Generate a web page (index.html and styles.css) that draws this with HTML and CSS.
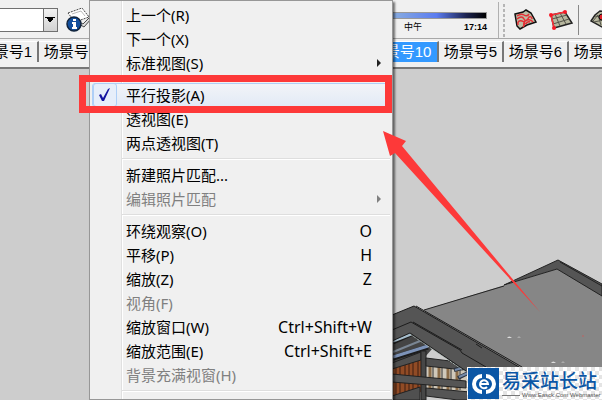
FILE: index.html
```html
<!DOCTYPE html>
<html lang="zh-CN">
<head>
<meta charset="utf-8">
<meta name="viewport" content="width=device-width, initial-scale=1">
<title>平行投影</title>
<link rel="stylesheet" href="styles.css">
</head>
<body>
<header class="toolbar">
  <select class="combo" aria-label="图层"><option></option></select>
  <button class="tool tool-info" aria-label="图层信息">
    <svg width="24" height="26" viewBox="0 0 24 26">
      <g stroke="#4a4a4a" stroke-width="1">
        <path d="M8 14 18 20 25 12 16 8Z" fill="#ddd"/>
        <path d="M6 11 17 17 24 10 14 5Z" fill="#eee"/>
        <path d="M2 6 16 1 23 10 9 15Z" fill="#fff" stroke-dasharray="2 1"/>
        <path d="M6 7 15 4 19 9" fill="none" stroke="#bbb"/>
      </g>
      <circle cx="8" cy="17" r="7" fill="#124f9e" stroke="#10233c" stroke-width="1.5"/>
      <path d="M7 12h3v2H7zM6 15h4v5h1v2H6v-2h1v-3H6z" fill="#fff"/>
    </svg>
  </button>
  <div class="time">
    <div class="time-bar"></div>
    <div class="time-labels"><span>中午</span><b>17:14</b></div>
  </div>
  <div class="divider divider-full"></div>
  <div class="grip"></div>
  <button class="tool" aria-label="根据等高线创建">
    <svg width="24" height="22" viewBox="0 0 24 22">
      <path d="M1 5 9 3 12 1 17 4 22 13 13 16 6 20 3 17Z" fill="#bcbba4" stroke="#111" stroke-width="1.5"/>
      <path d="M3 7q4-3 7-1t5-1M3 10q5-4 7 0t5-2q3-1 3 2M4 16q-1-5 4-4t1 6M10 17q-1-5 3-6t6 2M12 15q1-3 4-2" fill="none" stroke="#e52e35" stroke-width="1.5"/>
    </svg>
  </button>
  <button class="tool tool-grid" aria-label="根据网格创建">
    <svg width="26" height="22" viewBox="0 0 26 22">
      <path d="M3 6 17 3 24 14 6 19Z" fill="#b7b79f" stroke="#222" stroke-width="1.5"/>
      <path d="M4 10 19 6M5 15 21 10M7 5 12 17M12 4 18 15" stroke="#54544a" fill="none"/>
      <path d="M6 19 3 6 17 3" fill="none" stroke="#ff3038" stroke-width="1.5"/>
      <g fill="#f51926"><circle cx="3" cy="6" r="2"/><circle cx="17" cy="3" r="2"/><circle cx="6" cy="19" r="2"/></g>
    </svg>
  </button>
  <div class="divider"></div>
  <button class="tool tool-smoove" aria-label="曲面起伏">
    <svg width="24" height="22" viewBox="0 0 24 22">
      <path d="M1 12 5 6 10 2 17 3 23 14 12 18Z" fill="#b7b79f" stroke="#222" stroke-width="1.5"/>
      <path d="M3 12 8 6 11 16M5 7l12 2M4 13l14-3" fill="none" stroke="#54544a"/>
      <circle cx="12" cy="8" r="3" fill="#df2028" stroke="#111"/>
    </svg>
  </button>
</header>

<nav class="tabs">
  <button class="tab">场景号1</button>
  <button class="tab">场景号2</button>
  <button class="tab tab-active">场景号10</button>
  <button class="tab">场景号5</button>
  <button class="tab">场景号6</button>
  <button class="tab">场景号7</button>
</nav>

<main class="viewport">
  <svg class="scene" viewBox="0 69 602 331" preserveAspectRatio="xMinYMin slice" aria-hidden="true">
    <path d="M424 310 557 269 602 294V400H480Z" fill="#868686"/>
    <path d="M424 310 504 286" stroke="#222"/>
    <path d="M504 285 558 260 602 284V296L557 269Z" fill="#555" stroke="#222"/>
    <path d="M560 262 602 286" stroke="#222"/>
    <path d="M392 366 421 356V392L392 400Z" fill="#914b25"/>
    <path d="M396 364V400M400 362V400M405 360V400M409 358V400M413 356V400M418 354V400" stroke="#3d1f12"/>
    <path d="M427 364H468V392H427Z" fill="#cfc8ba"/>
    <path d="M430 366V390M439 366V390M448 366V390M457 366V390" stroke="#8b6c48" stroke-width="3"/>
    <path d="M433 366V390M442 366V390M451 366V390M460 366V390" stroke="#333"/>
    <path d="M392 334 411 330 432 349 425 357 392 368Z" fill="#444"/>
    <path d="M392 363 421 352V360L392 369Z" fill="#505050" stroke="#222"/>
    <path d="M393 352 420 341" stroke="#7a8694" stroke-width="2"/>
    <path d="M393 342 411 334M393 358 428 347" stroke="#1c1c1c" stroke-width="5"/>
    <path d="M393 341 411 334" stroke="#a5bccb" stroke-width="3"/>
    <path d="M393 357 428 346" stroke="#7d93b8" stroke-width="3"/>
    <path d="M421 351H426V400H421Z" fill="#474747" stroke="#222"/>
    <path d="M426 358 458 362 464 370 426 366Z" fill="#505050" stroke="#222"/>
    <path d="M392 374 466 381V388L392 382Z" fill="#555" stroke="#222"/>
    <path d="M426 388 470 392V400H458L426 396Z" fill="#555" stroke="#222"/>
    <path d="M392 396 420 387V400H392Z" fill="#505050" stroke="#222"/>
    <path d="M454 370 466 367M458 378 468 373" stroke="#2c3440" stroke-width="4"/>
    <path d="M455 370 466 367M459 377 468 373" stroke="#7489a7" stroke-width="2"/>
    <path d="M392 315 414 306 519 367V372H467L410 333 392 341Z" fill="#555"/>
    <path d="M410 334 466 372" stroke="#a8b4b0" stroke-dasharray="3 1"/>
    <path d="M392 315 414 306 519 367M416 306 522 367M392 330 411 322 460 350 462 353 486 367M413 322 462 350M392 341 410 333 466 371M476 344 482 348" fill="none" stroke="#1c1c1c"/>
    <path d="M507 338q2-3 5 0M551 363q2-3 5 0" fill="#ddd"/>
    <path d="M517 338l2-2 2 2M561 363l2-2 2 2" fill="#aaa"/>
    <path d="M582 336h2" stroke="#bd6260"/>
  </svg>
</main>

<div class="menu" role="menu">
  <button class="item">上一个(R)</button>
  <button class="item">下一个(X)</button>
  <button class="item">标准视图(S)<i class="more"></i></button>
  <hr>
  <button class="item item-checked">
    <span class="check"><svg width="14" height="16" viewBox="0 0 14 16"><path d="M1 8 3 7 5 11 10 2 12 1 6 14H4Z" fill="#1414a0"/></svg></span>平行投影(A)
  </button>
  <button class="item">透视图(E)</button>
  <button class="item">两点透视图(T)</button>
  <hr>
  <button class="item">新建照片匹配...</button>
  <button class="item" disabled>编辑照片匹配<i class="more"></i></button>
  <hr>
  <button class="item">环绕观察(O)<kbd>O</kbd></button>
  <button class="item">平移(P)<kbd>H</kbd></button>
  <button class="item">缩放(Z)<kbd>Z</kbd></button>
  <button class="item" disabled>视角(F)</button>
  <button class="item">缩放窗口(W)<kbd>Ctrl+Shift+W</kbd></button>
  <button class="item">缩放范围(E)<kbd>Ctrl+Shift+E</kbd></button>
  <button class="item" disabled>背景充满视窗(H)</button>
  <hr>
</div>

<div class="marker"></div>
<svg class="arrow" width="160" height="184" viewBox="0 0 160 184" aria-hidden="true">
  <path d="M0 0 23 10 19 15 157 181 12 22 7 25Z" fill="#fd3939"/>
</svg>

<footer class="brand">
  <svg class="brand-logo" width="32" height="32" viewBox="0 0 32 32" aria-hidden="true">
    <path d="M0 0H31V31H0Z" fill="#0b56a5"/>
    <path d="M14 6A10 10 0 0 0 14 26V22A6 6 0 0 1 14 10ZM18 6A10 10 0 0 1 18 26V22A6 6 0 0 0 18 10Z" fill="#fff"/>
    <path d="M12 16H20A4 4 0 1 0 19 19" fill="none" stroke="#fff" stroke-width="2"/>
  </svg>
  <div class="brand-text">
    <strong>易采站长站</strong>
    <small>Www.Easck.Com Webmaster</small>
  </div>
</footer>
</body>
</html>
```

FILE: styles.css
```css
* { box-sizing: border-box; }

body {
  margin: 0;
  min-height: 100vh;
  display: flex;
  flex-direction: column;
  position: relative;
  overflow: hidden;
  background: #f0f0f0;
  color: #000;
  font: 15px/24px "Noto Sans", "Noto Sans CJK SC", sans-serif;
}

button {
  border: 0;
  padding: 0;
  background: none;
  color: inherit;
  font: inherit;
}

.toolbar {
  display: flex;
  align-items: center;
  height: 39px;
  padding-top: 2px;
  border-bottom: 1px solid #a8a8a8;
}

.combo {
  appearance: none;
  width: 58px;
  height: 24px;
  flex: none;
  border: 1px solid #707070;
  border-left: 0;
  border-radius: 0;
  background:
    conic-gradient(from -45deg at 50% 100%, #000 90deg, transparent 0) right 2px top 9px / 0 0 no-repeat,
    linear-gradient(45deg, transparent 50%, #000 50%) right 7px top 8px / 5px 5px no-repeat,
    linear-gradient(-45deg, transparent 50%, #000 50%) right 2px top 8px / 5px 5px no-repeat,
    linear-gradient(#707070, #707070) right 13px top 0 / 1px 100% no-repeat,
    linear-gradient(#f2f2f2, #d2d2d2) right / 13px 100% no-repeat,
    #fff;
}

.tool { flex: none; display: flex; }
.tool-info { margin-left: 8px; }
.tool-grid { margin-left: 10px; }
.tool-smoove { margin-left: 11px; }

.time { width: 200px; margin-left: 197px; padding-top: 6px; flex: none; }
.time-bar {
  height: 7px;
  border: 1px solid #999;
  background: linear-gradient(90deg, #fff, #8fb3de 50%, #5b7cf0 75%, #1c2350 90%, #000);
}
.time-labels {
  display: flex;
  justify-content: flex-end;
  gap: 42px;
  font: 9px/16px "Liberation Sans", "Noto Sans CJK SC", sans-serif;
}

.grip {
  flex: none;
  width: 2px;
  height: 33px;
  margin: 0 9px 0 4px;
  background: repeating-linear-gradient(#b5b5b5 0 3px, transparent 3px 5px);
}
.divider { flex: none; width: 1px; height: 30px; margin-left: 4px; background: #888; }
.divider-full { height: 100%; margin-left: 11px; background: #b0b0b0; }

.tabs {
  display: flex;
  height: 28px;
  padding-top: 2px;
  margin-left: -26px;
  overflow: hidden;
}
.tab {
  flex: none;
  width: 65px;
  height: 21px;
  border-right: 2px solid #777;
  border-top: 1px solid #fff;
  font: 15px/20px "Liberation Sans", "Noto Sans CJK SC", sans-serif;
  white-space: nowrap;
}
.tab-active {
  width: 75px;
  margin-left: 260px;
  background: #3399ff;
  color: #fff;
}

.viewport {
  flex: 1;
  display: flex;
  border-top: 2px solid #777;
  background: #cdcdcd;
}
.scene { flex: 1; min-width: 0; }

.menu {
  position: absolute;
  top: 0;
  bottom: 0;
  left: 89px;
  width: 304px;
  padding: 2px 2px 0;
  overflow: hidden;
  border: 1px solid #979797;
  background: linear-gradient(90deg, transparent 31px, #e0e0e0 31px 32px, #fff 32px 33px, transparent 33px) #f0f0f0;
  box-shadow: 2px 2px 2px #0008;
}
.menu hr {
  height: 2px;
  margin: 3px 0 3px 30px;
  border: 0;
  border-top: 1px solid #dedede;
  border-bottom: 1px solid #fff;
}
.item {
  display: flex;
  align-items: center;
  width: 100%;
  height: 24px;
  padding: 0 9px 0 34px;
  white-space: nowrap;
}
.item:disabled { color: #808080; }
.item kbd { margin-left: auto; padding-right: 9px; font: inherit; font-size: 16px; }
.more {
  margin-left: auto;
  border: 4px solid transparent;
  border-left: 4px solid #222;
  border-right: 0;
}
.item:disabled .more { border-left-color: #808080; }

.item-checked {
  padding-left: 0;
  border: 1px solid #aecff7;
  border-radius: 3px;
  background: linear-gradient(#f2f4f8, #e2eaf6);
}
.check {
  display: flex;
  align-items: center;
  justify-content: center;
  width: 24px;
  height: 24px;
  margin-right: 9px;
  border: 1px solid #aecff7;
  border-radius: 3px;
  background: #e6eefa;
}

.marker {
  position: absolute;
  top: 75px;
  left: 79px;
  width: 313px;
  height: 38px;
  border: 7px solid #fd3939;
}
.arrow { position: absolute; top: 131px; left: 383px; }

.brand {
  position: absolute;
  right: 0;
  bottom: 0;
  display: flex;
  gap: 2px;
  width: 135px;
  height: 33px;
  padding: 1px 0 0 1px;
  overflow: hidden;
  background: repeating-conic-gradient(#e4e4e4 0 25%, #fff 0 50%) 0 0 / 8px 8px;
}
.brand-logo { flex: none; }
.brand-text { display: flex; flex-direction: column; white-space: nowrap; }
.brand-text strong { font: 500 19px/24px "Noto Sans CJK SC", sans-serif; color: #0b56a5; }
.brand-text small {
  display: flex;
  align-items: center;
  gap: 2px;
  font: 6px/6px "Liberation Sans", sans-serif;
  color: #555;
}
.brand-text small::before { content: ""; width: 18px; height: 1px; background: #777; }
```
